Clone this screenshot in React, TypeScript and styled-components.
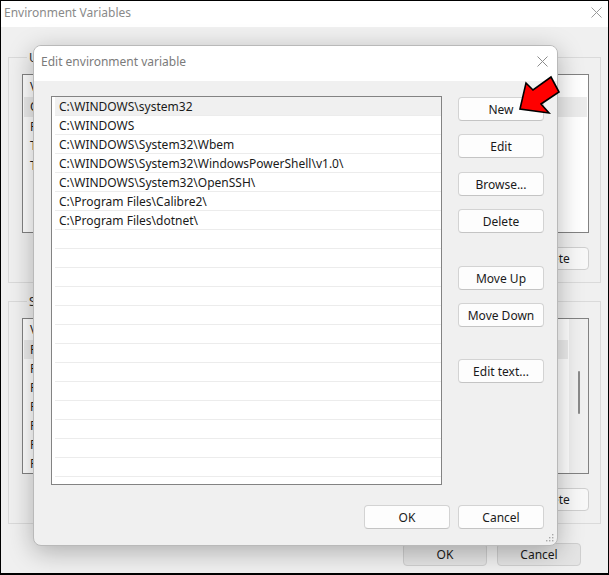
import * as React from "react";
import styled, { createGlobalStyle } from "styled-components";

const GlobalStyle = createGlobalStyle`
  html, body {
    margin: 0;
    padding: 0;
    background: #ffffff;
  }
  body {
    font-family: "Noto Sans", "Open Sans", Arial, sans-serif;
    font-size: 12px;
    color: #1a1a1a;
  }
`;

const Window = styled.div`
  position: relative;
  width: 609px;
  height: 575px;
  box-sizing: border-box;
  border: 1px solid #000;
  border-bottom-width: 2px;
  background: #f0f0f0;
  display: flex;
  flex-direction: column;
  overflow: hidden;
`;

const TitleBar = styled.div`
  height: 26px;
  box-sizing: border-box;
  flex: none;
  background: #ffffff;
  display: flex;
  align-items: center;
  justify-content: space-between;
  padding: 0 6px 4px 3px;
  color: #8a8a8a;
  font-size: 12px;
`;

const CloseGlyph = styled.svg<{ $color?: string }>`
  width: 11px;
  height: 11px;
  stroke: ${(p) => p.$color || "#9a9a9a"};
  stroke-width: 1;
  fill: none;
`;

const Body = styled.div`
  flex: 1;
  display: flex;
  flex-direction: column;
  padding: 22px 7px 0 7px;
`;

const Group = styled.fieldset<{ $gapTop?: number }>`
  margin: ${(p) => p.$gapTop || 0}px 0 0 0;
  border: 1px solid #dadada;
  padding: 8px 11px 12px 13px;
  display: flex;
  flex-direction: column;
  gap: 14px;
  min-width: 0;
`;

const Legend = styled.legend`
  padding: 0 2px;
  margin-left: 5px;
  color: #2a2a2a;
`;

const BgList = styled.div<{ $height: number }>`
  height: ${(p) => p.$height}px;
  background: #fff;
  border: 1px solid #828282;
  display: flex;
  overflow: hidden;
`;

const BgColumns = styled.div`
  flex: 1;
  display: flex;
  flex-direction: column;
  padding: 0 1px;
`;

const BgHeader = styled.div`
  height: 22px;
  display: flex;
  align-items: center;
  padding-left: 6px;
`;

const BgRow = styled.div<{ $selected?: boolean }>`
  height: 19.5px;
  display: flex;
  align-items: center;
  padding-left: 6px;
  background: ${(p) => (p.$selected ? "#ececec" : "transparent")};
`;

const BgCell = styled.span`
  flex: 1;
`;

const Scrollbar = styled.div`
  width: 19px;
  background: #f0f0f0;
  display: flex;
  justify-content: center;
  padding-top: 52px;
`;

const Thumb = styled.div`
  width: 2px;
  height: 43px;
  background: #8a8a8a;
  border-radius: 1px;
`;

const BgButtons = styled.div`
  display: flex;
  justify-content: flex-end;
  gap: 8px;
`;

const BgButton = styled.div<{ $shade?: boolean }>`
  width: ${(p) => (p.$shade ? 84 : 75)}px;
  height: 23px;
  box-sizing: border-box;
  border: 1px solid #cfcfcf;
  border-radius: 4px;
  background: ${(p) => (p.$shade ? "#e4e4e4" : "#f8f8f8")};
  display: flex;
  align-items: center;
  justify-content: center;
`;

const Footer = styled.div`
  display: flex;
  justify-content: flex-end;
  gap: 10px;
  padding: 19px 20px 0 0;
`;

/* modal dialog over the background window */
const Dialog = styled.div`
  position: absolute;
  left: 32px;
  top: 44px;
  width: 525px;
  height: 501px;
  box-sizing: border-box;
  border: 1px solid #b9b9b9;
  border-radius: 8px;
  background: #f0f0f0;
  box-shadow: 0 6px 26px rgba(0, 0, 0, 0.28);
  display: flex;
  flex-direction: column;
  overflow: hidden;
`;

const DialogTitle = styled.div`
  height: 35px;
  box-sizing: border-box;
  flex: none;
  background: #ffffff;
  display: flex;
  align-items: center;
  justify-content: space-between;
  padding: 0 9px 5px 7px;
  color: #7b7b7b;
`;

const DialogBody = styled.div`
  flex: 1;
  display: grid;
  grid-template-columns: 391px 86px;
  grid-template-rows: 389px auto;
  column-gap: 16px;
  row-gap: 20px;
  padding: 15px 13px 0 17px;
`;

const PathList = styled.div`
  border: 1px solid #838383;
  background: #fff;
  overflow: hidden;
  display: flex;
  flex-direction: column;
`;

const PathRow = styled.div<{ $selected?: boolean }>`
  height: 19px;
  flex: none;
  box-sizing: border-box;
  display: flex;
  align-items: center;
  padding-left: 4px;
  margin-left: 3px;
  border-bottom: 1px solid #ececec;
  background: ${(p) => (p.$selected ? "#f0f0f0" : "#fff")};
  white-space: nowrap;
`;

const ButtonColumn = styled.div`
  display: flex;
  flex-direction: column;
  gap: 13px;
  padding-top: 1px;
`;

const Button = styled.button<{ $before?: number }>`
  width: 86px;
  height: 24px;
  margin-top: ${(p) => p.$before || 0}px;
  box-sizing: border-box;
  border: 1px solid #d3d3d3;
  border-bottom-color: #c4c4c4;
  border-radius: 4px;
  background: #fdfdfd;
  font-family: inherit;
  font-size: 12px;
  color: #1a1a1a;
  padding: 0;
`;

const DialogFooter = styled.div`
  grid-column: 1 / span 2;
  display: flex;
  justify-content: flex-end;
  gap: 8px;
`;

const Grip = styled.svg`
  position: absolute;
  right: 3px;
  bottom: 3px;
  width: 8px;
  height: 8px;
  fill: #a8a8a8;
`;

const Arrow = styled.svg`
  position: absolute;
  left: 509px;
  top: 68px;
  width: 60px;
  height: 50px;
`;

const paths = [
  "C:\\WINDOWS\\system32",
  "C:\\WINDOWS",
  "C:\\WINDOWS\\System32\\Wbem",
  "C:\\WINDOWS\\System32\\WindowsPowerShell\\v1.0\\",
  "C:\\WINDOWS\\System32\\OpenSSH\\",
  "C:\\Program Files\\Calibre2\\",
  "C:\\Program Files\\dotnet\\",
];

const userVars = ["OneDrive", "Path", "TEMP", "TMP"];
const sysVars = [
  "Path",
  "PATHEXT",
  "PROCESSOR_ARCHITECTURE",
  "PROCESSOR_IDENTIFIER",
  "PROCESSOR_LEVEL",
  "PROCESSOR_REVISION",
  "PSModulePath",
];

const Close = ({ color }: { color?: string }) => (
  <CloseGlyph viewBox="0 0 11 11" $color={color}>
    <path d="M0.5 0.5 L10.5 10.5 M10.5 0.5 L0.5 10.5" />
  </CloseGlyph>
);

export default function App() {
  const rows = [...paths, ...Array(14).fill("")];
  return (
    <>
      <GlobalStyle />
      <Window>
        <TitleBar>
          <span>Environment Variables</span>
          <Close />
        </TitleBar>
        <Body>
          <Group>
            <Legend>User variables for user</Legend>
            <BgList $height={157}>
              <BgColumns>
                <BgHeader>
                  <BgCell>Variable</BgCell>
                </BgHeader>
                {userVars.map((v, i) => (
                  <BgRow key={v + i} $selected={i === 0}>
                    <BgCell>{v}</BgCell>
                  </BgRow>
                ))}
              </BgColumns>
            </BgList>
            <BgButtons>
              <BgButton>New...</BgButton>
              <BgButton>Edit...</BgButton>
              <BgButton>Delete</BgButton>
            </BgButtons>
          </Group>
          <Group $gapTop={10}>
            <Legend>System variables</Legend>
            <BgList $height={154}>
              <BgColumns>
                <BgHeader>
                  <BgCell>Variable</BgCell>
                </BgHeader>
                {sysVars.map((v, i) => (
                  <BgRow key={v} $selected={i === 0}>
                    <BgCell>{v}</BgCell>
                  </BgRow>
                ))}
              </BgColumns>
              <Scrollbar>
                <Thumb />
              </Scrollbar>
            </BgList>
            <BgButtons>
              <BgButton>New...</BgButton>
              <BgButton>Edit...</BgButton>
              <BgButton>Delete</BgButton>
            </BgButtons>
          </Group>
          <Footer>
            <BgButton $shade>OK</BgButton>
            <BgButton $shade>Cancel</BgButton>
          </Footer>
        </Body>

        <Dialog>
          <DialogTitle>
            <span>Edit environment variable</span>
            <Close color="#8c8c8c" />
          </DialogTitle>
          <DialogBody>
            <PathList>
              {rows.map((p, i) => (
                <PathRow key={i} $selected={i === 0}>
                  {p}
                </PathRow>
              ))}
            </PathList>
            <ButtonColumn>
              <Button>New</Button>
              <Button>Edit</Button>
              <Button $before={1}>Browse...</Button>
              <Button>Delete</Button>
              <Button $before={20}>Move Up</Button>
              <Button>Move Down</Button>
              <Button $before={19}>Edit text...</Button>
            </ButtonColumn>
            <DialogFooter>
              <Button>OK</Button>
              <Button>Cancel</Button>
            </DialogFooter>
          </DialogBody>
          <Grip viewBox="0 0 8 8">
            <rect x="6" y="0" width="1.4" height="1.4" />
            <rect x="3" y="3" width="1.4" height="1.4" />
            <rect x="6" y="3" width="1.4" height="1.4" />
            <rect x="0" y="6" width="1.4" height="1.4" />
            <rect x="3" y="6" width="1.4" height="1.4" />
            <rect x="6" y="6" width="1.4" height="1.4" />
          </Grip>
        </Dialog>

        <Arrow viewBox="0 0 60 50">
          <polygon
            points="10,40 16,14 23,21 41,8 49,23 31,35 39,44"
            fill="#ff0000"
            stroke="#000"
            strokeWidth="1.6"
            strokeLinejoin="miter"
          />
        </Arrow>
      </Window>
    </>
  );
}
